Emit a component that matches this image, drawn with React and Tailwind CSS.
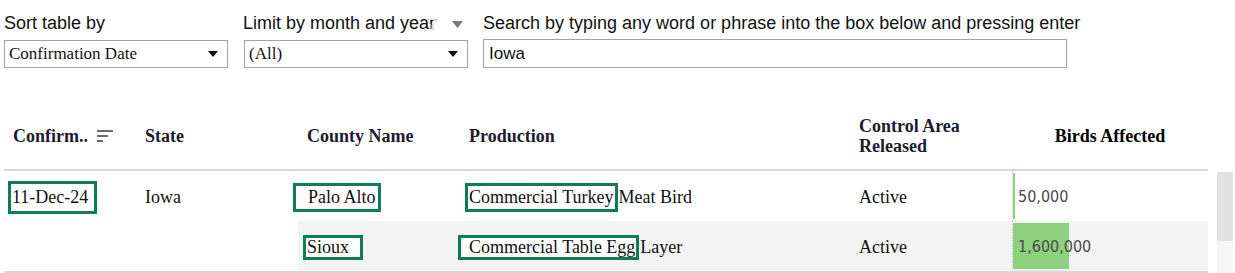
import React from "react";

const serif = { fontFamily: '"Liberation Serif", "Times New Roman", serif' };

const Caret = () => (
  <svg width="10" height="6" viewBox="0 0 10 6" className="shrink-0">
    <path d="M0 0 L10 0 L5 6 Z" fill="#111" />
  </svg>
);

const Dropdown = ({ value }) => (
  <div className="flex h-[28px] w-[224px] items-center justify-between border border-[#a3a3a3] bg-white pl-[4px] pr-[9px]">
    <span className="text-[17px] text-[#111]" style={serif}>{value}</span>
    <Caret />
  </div>
);

const SortIcon = () => (
  <svg width="16" height="14" viewBox="0 0 16 14" className="ml-[9px]">
    <rect x="0" y="1" width="16" height="2" fill="#6b6b6b" />
    <rect x="0" y="6" width="11" height="2" fill="#6b6b6b" />
    <rect x="0" y="11" width="6" height="2" fill="#6b6b6b" />
  </svg>
);

const Boxed = ({ children, className = "" }) => (
  <span className={`inline-flex shrink-0 items-center whitespace-nowrap border-[3px] border-[#0b7d58] bg-[#fffdfe] ${className}`}>
    {children}
  </span>
);

const widths = ["w-[133px]", "w-[161px]", "w-[162px]", "w-[390px]", "w-[162px]", "w-[196px]"];

const rows = [
  {
    date: "11-Dec-24",
    state: "Iowa",
    county: (
      <Boxed className="-ml-[5px] h-[29px] pl-[12px] pr-[2px]">Palo Alto</Boxed>
    ),
    prod: (
      <>
        <Boxed className="ml-[5px] h-[29px] pl-[1px] pr-[1px]">Commercial Turkey</Boxed>
        <span className="ml-[1px] whitespace-nowrap">Meat Bird</span>
      </>
    ),
    status: "Active",
    birds: "50,000",
    bar: "w-[2px]",
    gray: false,
  },
  {
    date: "",
    state: "",
    county: <Boxed className="ml-[5px] h-[25px] w-[60px] pl-[1px]">Sioux</Boxed>,
    prod: (
      <>
        <Boxed className="-ml-[2px] h-[25px] pl-[8px] pr-[1px]">Commercial Table Egg</Boxed>
        <span className="ml-[1px] whitespace-nowrap">Layer</span>
      </>
    ),
    status: "Active",
    birds: "1,600,000",
    bar: "w-[56px]",
    gray: true,
  },
];

export default function App() {
  return (
    <div className="h-[273px] w-[1235px] overflow-hidden bg-white" style={{ fontFamily: '"Liberation Sans", Arial, sans-serif' }}>
      {/* filters */}
      <div className="flex pt-[12px]">
        <div className="ml-[4px] w-[224px]">
          <div className="h-[22px] whitespace-nowrap text-[18px] leading-[22px] text-[#111]">Sort table by</div>
          <div className="mt-[6px]">
            <Dropdown value="Confirmation Date" />
          </div>
        </div>
        <div className="ml-[16px] w-[224px]">
          <div className="flex h-[22px] items-center whitespace-nowrap text-[18px] leading-[22px] text-[#111]">
            <span className="-ml-[1px]">Limit by month and year</span>
            <svg width="12" height="12" viewBox="0 0 12 12" className="-ml-[9px] mt-[4px]">
              <path d="M0.5 0.5 H11.5 L7 6 V11 L5 10 V6 Z" fill="none" stroke="#cfcfcf" strokeWidth="1" />
            </svg>
            <svg width="11" height="7" viewBox="0 0 11 7" className="ml-[14px] mt-[3px]">
              <path d="M0 0 L11 0 L5.5 7 Z" fill="#7a7a7a" />
            </svg>
          </div>
          <div className="mt-[6px]">
            <Dropdown value="(All)" />
          </div>
        </div>
        <div className="ml-[15px] w-[584px]">
          <div className="h-[22px] whitespace-nowrap text-[18px] leading-[22px] text-[#111]">
            Search by typing any word or phrase into the box below and pressing enter
          </div>
          <div className="mt-[5px] flex h-[29px] items-center border border-[#a3a3a3] pl-[5px] text-[17px] text-[#111]">
            Iowa
          </div>
        </div>
      </div>

      {/* table */}
      <div className="mt-[34px] flex">
        <div className="ml-[4px] w-[1204px]" style={serif}>
          <div className="flex h-[69px] items-center border-b-2 border-[#d6d6d6] text-[18px] font-bold leading-[20px] text-[#1c1c2c]">
            <div className={`${widths[0]} flex items-center pl-[9px]`}>
              Confirm..
              <SortIcon />
            </div>
            <div className={`${widths[1]} pl-[8px]`}>State</div>
            <div className={`${widths[2]} pl-[9px]`}>County Name</div>
            <div className={`${widths[3]} pl-[9px]`}>Production</div>
            <div className={`${widths[4]} pl-[9px]`}>
              Control Area
              <br />
              Released
            </div>
            <div className={`${widths[5]} text-center text-black`}>Birds Affected</div>
          </div>

          {rows.map((r, i) => (
            <div key={i} className="flex h-[50px] pt-[2px] text-[18px] text-[#111]">
              <div className={`${widths[0]} flex items-center`}>
                {r.date && <Boxed className="ml-[4px] h-[33px] w-[89px] pl-[1px]">{r.date}</Boxed>}
              </div>
              <div className={`${widths[1]} flex items-center pl-[8px]`}>{r.state}</div>
              <div className={`-mt-[2px] flex flex-1 pt-[2px] ${r.gray ? "bg-[#f3f3f3]" : "bg-white"}`}>
                <div className={`${widths[2]} flex items-center`}>{r.county}</div>
                <div className={`${widths[3]} flex items-center`}>{r.prod}</div>
                <div className={`${widths[4]} flex items-center pl-[9px]`}>{r.status}</div>
                <div className={`${widths[5]} relative -mt-[2px] flex items-center border-l border-dotted border-[#cfcfcf] pt-[2px]`}>
                  <div className={`absolute left-0 top-[2px] bottom-[2px] ${r.bar} bg-[#8dd17e]`} />
                  <span className="relative pl-[5px] text-[16px] text-[#4a4a4a]" style={{ fontFamily: '"DejaVu Sans Condensed", "Liberation Sans", sans-serif' }}>
                    {r.birds}
                  </span>
                </div>
              </div>
            </div>
          ))}
          <div className="h-[2px] bg-[#d6d6d6]" />
        </div>

        {/* scrollbar */}
        <div className="ml-[9px] mt-[70px] flex w-[16px] flex-col">
          <div className="h-[69px] bg-[#e1e1e1]" />
          <div className="h-[40px] bg-[#f6f6f6]" />
        </div>
      </div>
    </div>
  );
}
